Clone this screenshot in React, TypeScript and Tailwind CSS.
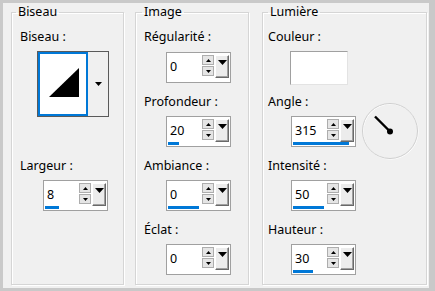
import React from "react";

function SpinBtn({ up }: { up?: boolean }) {
  return (
    <div className="flex h-[10px] w-[12px] items-center justify-center border border-[#adadad] bg-[#e5e5e5]">
      <svg width="5" height="3" viewBox="0 0 5 3">
        {up ? <polygon points="0,3 5,3 2.5,0" fill="#000" /> : <polygon points="0,0 5,0 2.5,3" fill="#000" />}
      </svg>
    </div>
  );
}

function DropBtn() {
  return (
    <div className="ml-[1px] flex h-[23px] w-[14px] justify-center border-b border-l border-r border-t border-b-[#696969] border-l-white border-r-[#696969] border-t-white bg-[#ececec] pt-[4px] shadow-[inset_-1px_-1px_0_#a0a0a0]">
      <svg width="9" height="5" viewBox="0 0 9 5">
        <polygon points="0,0 9,0 4.5,5" fill="#000" />
      </svg>
    </div>
  );
}

function SpinBox({ value, bar }: { value: string; bar?: string }) {
  return (
    <div className="relative flex h-[31px] w-[65px] border border-[#a0a0a0] bg-white pt-[2px]">
      <div className="mt-[4px] w-[35px] pl-[3px]">{value}</div>
      <div className="flex flex-col gap-[1px]">
        <SpinBtn up />
        <SpinBtn />
      </div>
      <DropBtn />
      {bar && <div className={`absolute bottom-[1px] left-[1px] h-[3px] bg-[#0078d7] ${bar}`} />}
    </div>
  );
}

function Dial() {
  return (
    <svg width="58" height="58" viewBox="0 0 58 58" className="-mb-[13px] -mt-[14px] ml-[5px]">
      <circle cx="29" cy="29" r="27.5" fill="none" stroke="#ffffff" strokeWidth="1" transform="translate(0.6,0.6)" />
      <circle cx="29" cy="29" r="27.5" fill="none" stroke="#cfcfcf" strokeWidth="1" />
      <line x1="14" y1="14.5" x2="29" y2="29.5" stroke="#000" strokeWidth="2.4" />
      <circle cx="29" cy="29.5" r="3" fill="#000" />
    </svg>
  );
}

const fs =
  "h-[281px] border border-[#d5d5d5] shadow-[1px_1px_0_#ffffff,inset_1px_1px_0_#ffffff]";

export default function App() {
  return (
    <div className="h-[291px] w-[435px] bg-[#c9c9c9] pl-[3px] pt-[3px] font-['Noto_Sans',sans-serif] text-[12.5px] leading-[16px] text-black">
      <div className="flex h-[285px] w-[426px] bg-[#f0f0f0] pl-[8px] pt-[1px]">
        <fieldset className={`${fs} w-[113px]`}>
          <legend className="ml-[4px] px-[2px]">Biseau</legend>
          <div className="flex flex-col items-start">
            <div className="ml-[8px] mt-[9px]">Biseau :</div>
            <div className="ml-[25px] mt-[6px] flex h-[66px] w-[72px] border border-[#5a5a5a]">
              <div className="h-full w-[50px] border-2 border-[#0078d7] bg-white">
                <svg width="46" height="60" viewBox="0 0 46 60">
                  <polygon points="9,43 39,14 39,43" fill="#000" />
                </svg>
              </div>
              <div className="flex flex-1 items-center justify-center bg-[#f0f0f0]">
                <svg width="7" height="4" viewBox="0 0 7 4">
                  <polygon points="0,0 7,0 3.5,4" fill="#000" />
                </svg>
              </div>
            </div>
            <div className="ml-[8px] mt-[41px]">Largeur :</div>
            <div className="ml-[31px] mt-[6px]">
              <SpinBox value="8" bar="w-[14px]" />
            </div>
          </div>
        </fieldset>

        <fieldset className={`${fs} ml-[11px] w-[114px]`}>
          <legend className="ml-[6px] px-[2px]">Image</legend>
          <div className="flex flex-col items-start">
            <div className="ml-[8px] mt-[9px]">Régularité :</div>
            <div className="ml-[30px] mt-[7px]">
              <SpinBox value="0" />
            </div>
            <div className="ml-[8px] mt-[11px]">Profondeur :</div>
            <div className="ml-[30px] mt-[6px]">
              <SpinBox value="20" bar="w-[11px]" />
            </div>
            <div className="ml-[8px] mt-[11px]">Ambiance :</div>
            <div className="ml-[30px] mt-[6px]">
              <SpinBox value="0" bar="w-[31px]" />
            </div>
            <div className="ml-[8px] mt-[11px]">Éclat :</div>
            <div className="ml-[30px] mt-[6px]">
              <SpinBox value="0" />
            </div>
          </div>
        </fieldset>

        <fieldset className={`${fs} ml-[13px] w-[165px]`}>
          <legend className="ml-[5px] px-[2px]">Lumière</legend>
          <div className="flex flex-col items-start">
            <div className="ml-[5px] mt-[9px]">Couleur :</div>
            <div className="ml-[27px] mt-[6px] h-[34px] w-[58px] border border-b-[#e3e3e3] border-l-[#a0a0a0] border-r-[#e3e3e3] border-t-[#a0a0a0] bg-white" />
            <div className="ml-[5px] mt-[9px]">Angle :</div>
            <div className="ml-[28px] mt-[6px] flex items-start">
              <SpinBox value="315" bar="w-[56px]" />
              <Dial />
            </div>
            <div className="ml-[5px] mt-[11px]">Intensité :</div>
            <div className="ml-[28px] mt-[6px]">
              <SpinBox value="50" bar="w-[31px]" />
            </div>
            <div className="ml-[5px] mt-[11px]">Hauteur :</div>
            <div className="ml-[28px] mt-[6px]">
              <SpinBox value="30" bar="w-[20px]" />
            </div>
          </div>
        </fieldset>
      </div>
    </div>
  );
}
